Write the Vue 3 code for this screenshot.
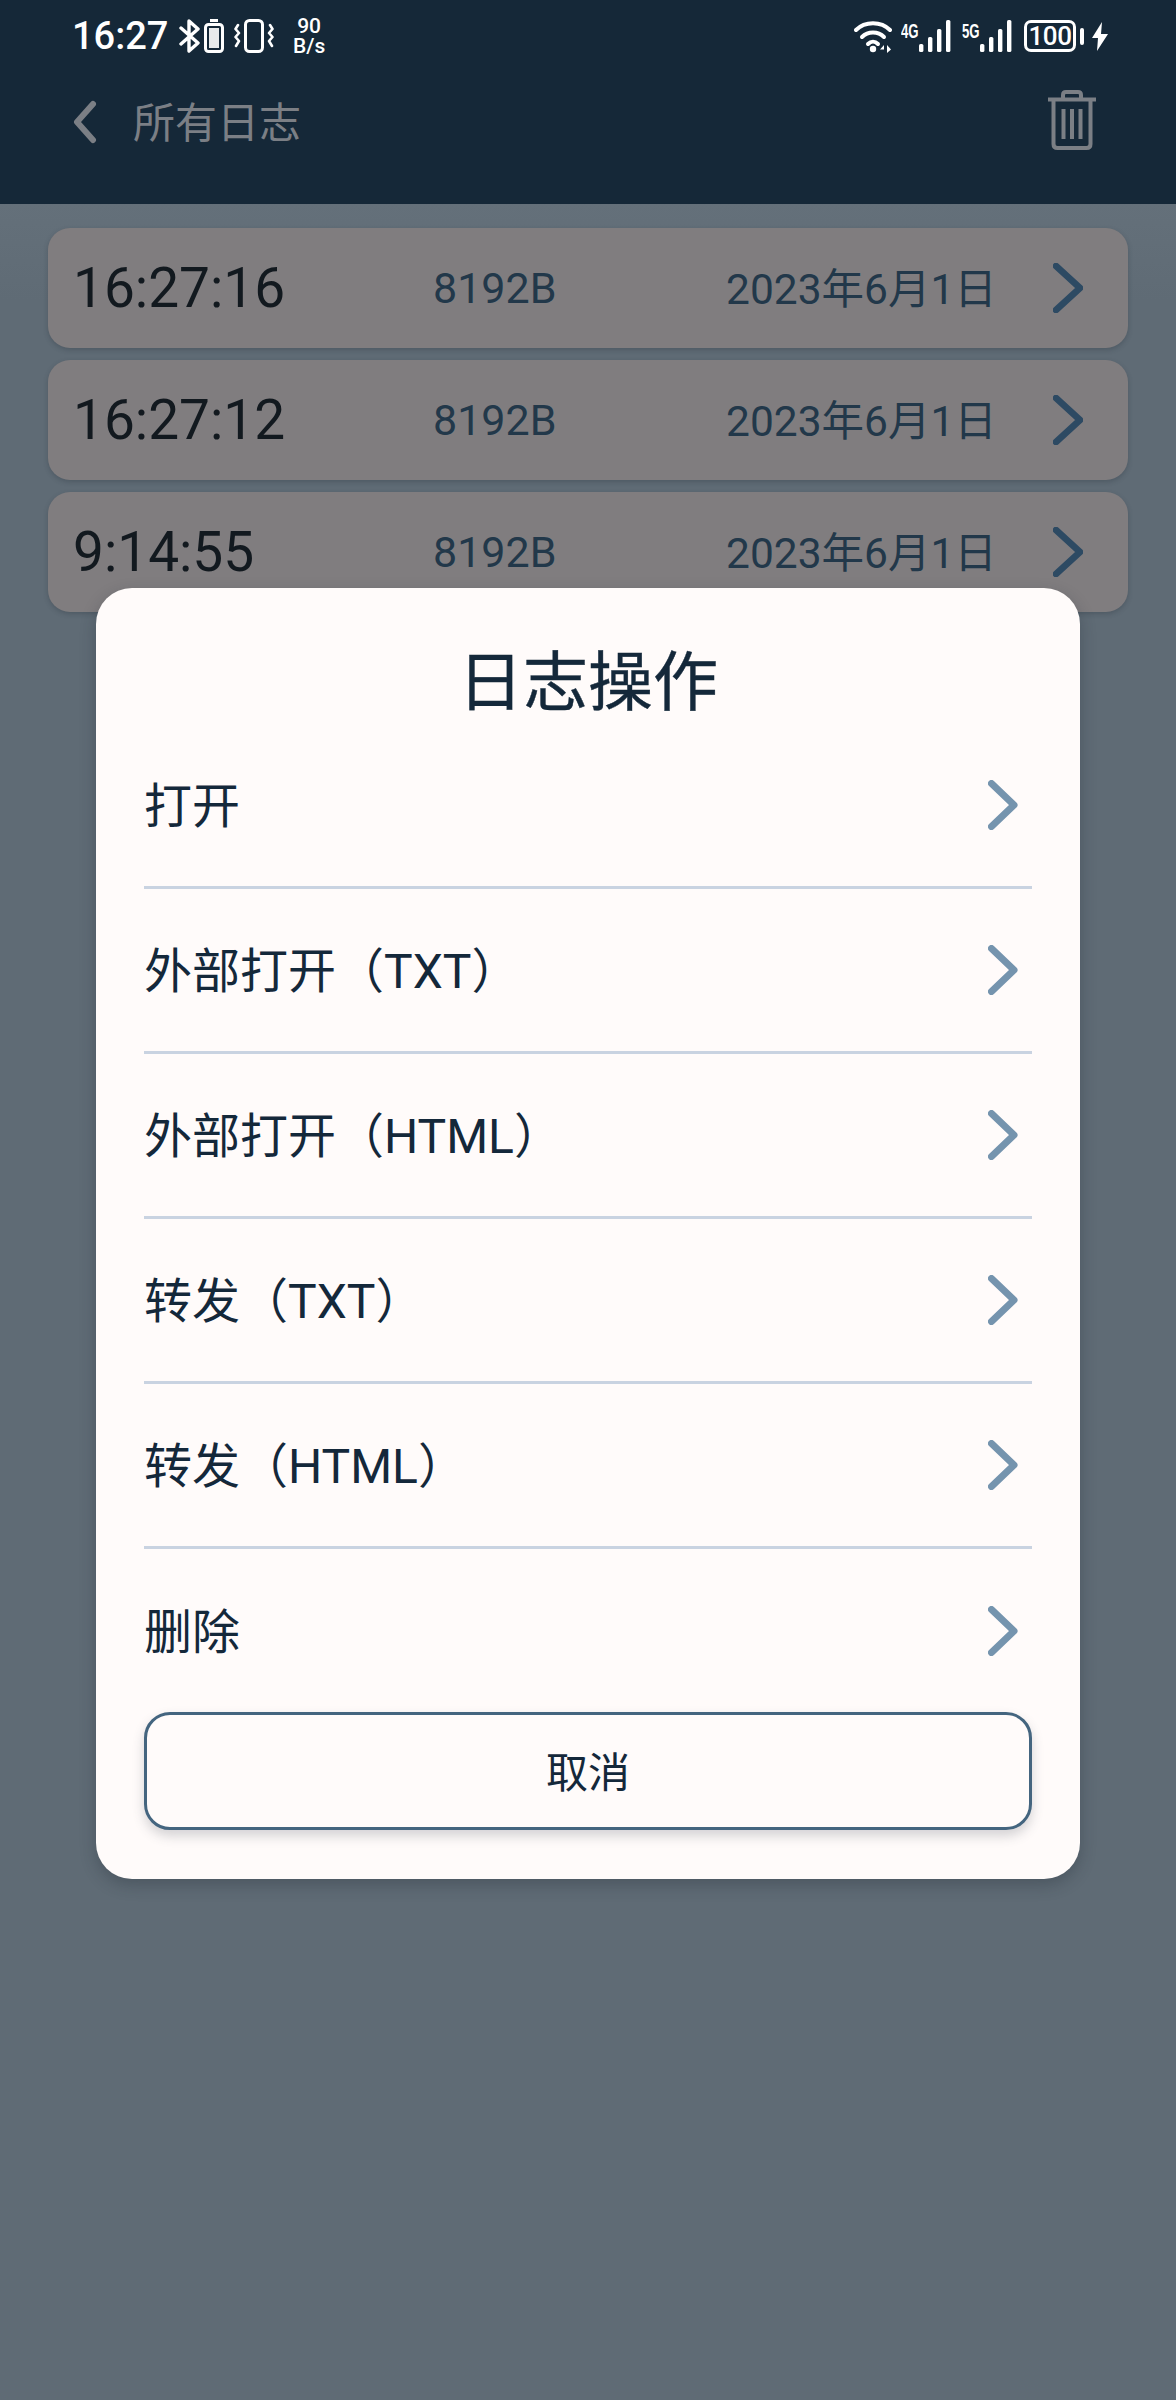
<script setup>
const logs = [
  { time: '16:27:16', size: '8192B', date: '2023年6月1日' },
  { time: '16:27:12', size: '8192B', date: '2023年6月1日' },
  { time: '9:14:55', size: '8192B', date: '2023年6月1日' },
]
const actions = ['打开', '外部打开（TXT）', '外部打开（HTML）', '转发（TXT）', '转发（HTML）', '删除']
const levels = [8, 15, 23, 32]
</script>

<template>
  <div class="page">
    <header class="header">
      <div class="status">
        <div class="status-left">
          <span class="clock">16:27</span>
          <svg class="ic-bt" width="22" height="34" viewBox="0 0 22 34" fill="none" stroke="#fff" stroke-width="3.4" stroke-linejoin="round" stroke-linecap="round">
            <path d="M2 9 L19 24 L10 32 V2 L19 10 L2 25" />
          </svg>
          <svg class="ic-bat" width="20" height="34" viewBox="0 0 20 34" fill="none" stroke="#fff">
            <path d="M6 1.5 H14" stroke-width="3" />
            <rect x="1.5" y="5.5" width="17" height="27" rx="3" stroke-width="3" />
            <rect x="5" y="9" width="10" height="20" fill="#fff" stroke="none" opacity=".9" />
          </svg>
          <svg class="ic-vib" width="40" height="34" viewBox="0 0 40 34" fill="none" stroke="#fff" stroke-linecap="round" stroke-linejoin="round">
            <rect x="11.5" y="1.5" width="17" height="31" rx="4" stroke-width="3" />
            <path d="M4 6 L1.5 10 L5 14 L1.5 18 L5 22 L2 27" stroke-width="2.6" />
            <path d="M36 6 L38.5 10 L35 14 L38.5 18 L35 22 L38 27" stroke-width="2.6" />
          </svg>
          <span class="speed"><span>90</span><span>B/s</span></span>
        </div>
        <div class="status-right">
          <svg class="ic-wifi" width="38" height="34" viewBox="0 0 38 34" fill="none" stroke="#fff" stroke-width="4" stroke-linecap="round">
            <path d="M2 11 C11 2 27 2 36 11" />
            <path d="M8 18 C14 12 24 12 30 18" />
            <path d="M14 25 C17 22 21 22 24 25" />
            <circle cx="19" cy="30" r="3.2" fill="#fff" stroke="none" />
            <path d="M30 26 L26 30.5 H30 V34 Z" fill="#fff" stroke="none" />
            <path d="M33 26 L37 30.5 L33 34 Z" fill="#fff" stroke="none" />
          </svg>
          <span class="net net-4g">4G</span>
          <svg class="bars" width="33" height="32" viewBox="0 0 33 32" fill="#fff">
            <rect v-for="(h, i) in levels" :key="i" :x="1 + i * 9" :y="32 - h" width="4.4" :height="h" rx="1.6" />
          </svg>
          <span class="net net-5g">5G</span>
          <svg class="bars" width="33" height="32" viewBox="0 0 33 32" fill="#fff">
            <rect v-for="(h, i) in levels" :key="i" :x="1 + i * 9" :y="32 - h" width="4.4" :height="h" rx="1.6" />
          </svg>
          <span class="battery">100</span>
          <span class="battery-tip"></span>
          <svg class="ic-bolt" width="16" height="29" viewBox="0 0 16 29" fill="#fff">
            <path d="M10 0 L0 16 H6 L5 29 L16 12 H9 Z" />
          </svg>
        </div>
      </div>
      <div class="toolbar">
        <div class="toolbar-left">
          <svg class="back" width="24" height="44" viewBox="0 0 24 44" fill="none" stroke="#7b7f85" stroke-width="6" stroke-linecap="round" stroke-linejoin="round">
            <path d="M20 4 L4 22 L20 40" />
          </svg>
          <span class="title">所有日志</span>
        </div>
        <svg class="trash" width="48" height="60" viewBox="0 0 48 60" fill="none" stroke="#7b7f85" stroke-width="4">
          <path d="M0 9.5 H48" />
          <path d="M15 9 V5 Q15 2 18 2 H30 Q33 2 33 5 V9" />
          <path d="M5.5 10 V54 Q5.5 58 9.5 58 H38.5 Q42.5 58 42.5 54 V10" />
          <path d="M15.5 19 V49 M24 19 V49 M32.5 19 V49" />
        </svg>
      </div>
    </header>

    <section class="logs">
      <div v-for="log in logs" :key="log.time" class="log">
        <span class="log-time">{{ log.time }}</span>
        <span class="log-size">{{ log.size }}</span>
        <span class="log-date">{{ log.date }}</span>
        <svg width="30" height="50" viewBox="0 0 30 50" fill="none" stroke="#2d4a63" stroke-width="6.5" stroke-linecap="round" stroke-linejoin="round">
          <path d="M3 3 L27 25 L3 47" />
        </svg>
      </div>
    </section>

    <div class="dialog">
      <h2 class="dialog-title">日志操作</h2>
      <ul class="actions">
        <li v-for="a in actions" :key="a" class="action">
          <span class="action-label">{{ a }}</span>
          <svg width="30" height="50" viewBox="0 0 30 50" fill="none" stroke="#7594ae" stroke-width="7" stroke-linecap="round" stroke-linejoin="round">
            <path d="M3.5 3.5 L26 25 L3.5 46.5" />
          </svg>
        </li>
      </ul>
      <button class="cancel" type="button">取消</button>
    </div>
  </div>
</template>

<style>
html, body { margin: 0; background: #5f6b75; }
</style>

<style scoped>
.page {
  position: relative;
  height: 2400px;
  overflow: hidden;
  background: linear-gradient(#64707a 204px, #5f6b75 300px);
  font-family: Roboto, "Noto Sans CJK SC", sans-serif;
}
.header {
  height: 204px;
  background: #152838;
  display: flex;
  flex-direction: column;
}
.status {
  height: 72px;
  padding: 0 68px 0 72px;
  display: flex;
  justify-content: space-between;
  align-items: center;
  color: #fff;
}
.status-left, .status-right { display: flex; align-items: center; }
.clock { font-size: 38px; font-weight: 500; line-height: 1; width: 107px; }
.ic-bat { margin-left: 3px; }
.ic-vib { margin-left: 10px; }
.speed {
  display: flex;
  flex-direction: column;
  align-items: center;
  margin-left: 19px;
  font-size: 21px;
  line-height: 20px;
  font-weight: 500;
}
.net {
  font-family: "Liberation Sans", Roboto, sans-serif;
  font-size: 20px;
  font-weight: 700;
  line-height: 1;
  align-self: flex-start;
  margin-top: 2px;
  transform: scaleX(.66);
  transform-origin: left;
  width: 17px;
}
.net-4g { margin-left: 9px; }
.net-5g { margin-left: 11px; }
.battery {
  margin-left: 12px;
  width: 52px;
  height: 32px;
  box-sizing: border-box;
  border: 3px solid #fff;
  border-radius: 7px;
  font-size: 26px;
  line-height: 26px;
  text-align: center;
  font-weight: 500;
  letter-spacing: -0.5px;
}
.battery-tip {
  width: 4px;
  height: 17px;
  margin-left: 4px;
  border-radius: 2px;
  background: #fff;
}
.ic-bolt { margin-left: 8px; }
.toolbar {
  height: 96px;
  padding: 0 80px 0 73px;
  display: flex;
  justify-content: space-between;
  align-items: center;
}
.toolbar-left { display: flex; align-items: center; }
.back { margin-top: 4px; }
.title { margin-left: 36px; font-size: 42px; line-height: 1; color: #7b7f85; margin-top: 8px; }
.logs {
  padding: 24px 48px;
  display: flex;
  flex-direction: column;
  gap: 12px;
}
.log {
  height: 120px;
  box-sizing: border-box;
  padding-left: 25px;
  border-radius: 22px;
  background: #807d7f;
  box-shadow: 0 2px 5px rgba(40, 50, 60, .3);
  display: flex;
  align-items: center;
}
.log-time { flex: 0 0 360px; font-size: 55px; color: #12191f; }
.log-size { flex: 0 0 293px; font-size: 43px; color: #22384a; }
.log-date { flex: 0 0 327px; font-size: 42.5px; color: #22384a; margin-bottom: 5px; }
.dialog {
  position: absolute;
  top: 588px;
  left: 96px;
  width: 984px;
  height: 1291px;
  box-sizing: border-box;
  padding: 0 48px;
  border-radius: 36px;
  background: #fffbfa;
  box-shadow: 0 6px 16px rgba(30, 40, 50, .3);
  color: #14283a;
}
.dialog-title {
  margin: 0;
  height: 136px;
  box-sizing: border-box;
  padding-top: 44px;
  font-size: 65px;
  font-weight: 400;
  line-height: 102px;
  text-align: center;
  -webkit-text-stroke: .4px #14283a;
}
.actions { list-style: none; margin: 0; padding: 0; }
.action {
  height: 165px;
  box-sizing: border-box;
  padding-right: 14px;
  border-bottom: 3px solid #c9d3e1;
  display: flex;
  justify-content: space-between;
  align-items: center;
  font-size: 48px;
  color: #14283a;
}
.action-label { margin-bottom: 6px; }
.action:last-child { height: 163px; border-bottom: 0; }
.cancel {
  display: block;
  width: 888px;
  height: 118px;
  margin: 0;
  padding: 0 0 3px;
  border: 3px solid #44657f;
  border-radius: 26px;
  background: #fffbfa;
  box-shadow: 0 6px 12px rgba(60, 70, 80, .22);
  font-family: inherit;
  font-size: 42px;
  color: #14283a;
}
</style>
